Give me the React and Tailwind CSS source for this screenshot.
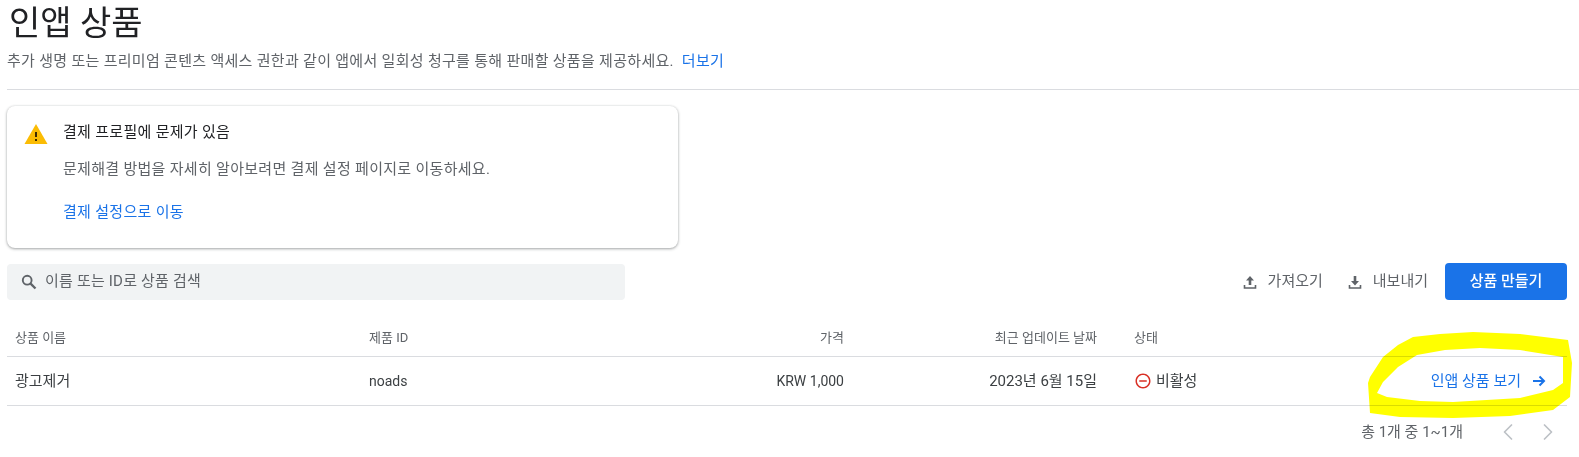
import { MdRemoveCircleOutline } from 'react-icons/md';
import { ChevronLeft, ChevronRight } from 'lucide-react';

const FONT = 'font-[Roboto,"Noto_Sans_CJK_KR",sans-serif]';
const ROW = 'grid grid-cols-[355px_300px_182px_253px_37px_1fr] items-center border-b border-[#dadce0]';

// yellow marker circle someone drew over the screenshot
const Highlight = () => (
  <svg className="absolute left-0 top-0 pointer-events-none mix-blend-multiply" width="1579" height="457">
    <path
      fill="#ffff00"
      fillRule="evenodd"
      d="M1368 383 L1370 377 L1383 357 L1398 345 L1413 337 L1440 334 L1473 332 L1520 334 L1568 340 L1572 363 L1570 397 L1553 410 L1510 416 L1453 418 L1400 417 L1370 413 Z
         M1377 393 L1383 382 L1398 367 L1417 355 L1445 350 L1480 348 L1520 350 L1563 357 L1563 383 L1553 390 L1520 398 L1453 402 L1420 401 L1387 397 Z"
    />
  </svg>
);

const WarningIcon = () => (
  <svg width="24" height="24" viewBox="0 0 24 24">
    <path d="M12 2 L23.5 22 H0.5 Z" fill="#fbbc04" />
    <rect x="11" y="10" width="2" height="5" fill="#3c2a00" />
    <rect x="11" y="17" width="2" height="2" fill="#3c2a00" />
  </svg>
);

const SearchIcon = () => (
  <svg width="18" height="18" viewBox="0 0 18 18" fill="none" stroke="currentColor">
    <circle cx="7.2" cy="7.2" r="4.4" strokeWidth="1.9" />
    <path d="M10.6 10.6 L15.5 15.5" strokeWidth="2.3" />
  </svg>
);

const UploadIcon = () => (
  <svg width="18" height="18" viewBox="0 0 18 18" fill="currentColor">
    <path d="M9 3 L13 7.5 H10.3 V12 H7.7 V7.5 H5 Z" />
    <path d="M3.5 12 V15 H14.5 V12" fill="none" stroke="currentColor" strokeWidth="1.6" />
  </svg>
);

const DownloadIcon = () => (
  <svg width="18" height="18" viewBox="0 0 18 18" fill="currentColor">
    <path d="M9 12.5 L13 8 H10.3 V3 H7.7 V8 H5 Z" />
    <path d="M3.5 12 V15 H14.5 V12" fill="none" stroke="currentColor" strokeWidth="1.6" />
  </svg>
);

const ArrowIcon = () => (
  <svg width="16" height="16" viewBox="0 0 16 16" fill="none" stroke="currentColor" strokeWidth="2" className="ml-[10px]">
    <path d="M2 8 H13" />
    <path d="M8.5 3.5 L13 8 L8.5 12.5" />
  </svg>
);

export default function App() {
  return (
    <div className={`relative h-[457px] w-[1579px] overflow-hidden bg-white pl-[7px] ${FONT}`}>
      <header className="h-[90px] border-b border-[#dadce0]">
        <h1 className="ml-[2px] pt-[2px] text-[34px] leading-[42px] text-[#202124]">인앱 상품</h1>
        <p className="mt-[7px] text-[15px] tracking-[0.3px] leading-[20px] text-[#5f6368]">
          추가 생명 또는 프리미엄 콘텐츠 액세스 권한과 같이 앱에서 일회성 청구를 통해 판매할 상품을 제공하세요.
          <a className="ml-[8px] text-[#1a73e8]">더보기</a>
        </p>
      </header>

      <section className="mt-[16px] h-[142px] w-[671px] rounded-lg bg-white shadow-[0_1px_3px_rgba(60,64,67,0.45),0_0_2px_rgba(60,64,67,0.12)] flex pl-[17px] pt-[16px]">
        <WarningIcon />
        <div className="ml-[15px] leading-[20px]">
          <div className="text-[15px] tracking-[0.3px] text-[#202124]">결제 프로필에 문제가 있음</div>
          <div className="mt-[17px] text-[15px] tracking-[0.3px] text-[#5f6368]">문제해결 방법을 자세히 알아보려면 결제 설정 페이지로 이동하세요.</div>
          <a className="mt-[23px] block text-[15px] tracking-[0.3px] text-[#1a73e8]">결제 설정으로 이동</a>
        </div>
      </section>

      <div className="mt-[15px] flex h-[37px] items-center pr-[12px]">
        <div className="flex h-[36px] w-[618px] items-center rounded bg-[#f1f3f4] pl-[13px] text-[15px] tracking-[0.2px] text-[#5f6368]">
          <SearchIcon />
          <span className="ml-[7px]">이름 또는 ID로 상품 검색</span>
        </div>
        <div className="ml-auto flex items-center text-[15px] text-[#5f6368]">
          <UploadIcon />
          <span className="ml-[9px]">가져오기</span>
          <span className="ml-[23px]"><DownloadIcon /></span>
          <span className="ml-[9px]">내보내기</span>
          <button className="ml-[17px] h-[37px] w-[122px] rounded bg-[#1a73e8] text-[15px] font-medium text-white">상품 만들기</button>
        </div>
      </div>

      <div className="mt-[20px] mr-[12px]">
        <div className={`${ROW} h-[37px] text-[13px] text-[#5f6368]`}>
          <div className="pl-[8px]">상품 이름</div>
          <div className="pl-[7px]">제품 ID</div>
          <div className="text-right">가격</div>
          <div className="text-right">최근 업데이트 날짜</div>
          <div />
          <div>상태</div>
        </div>
        <div className={`${ROW} h-[49px] text-[15px] text-[#3c4043]`}>
          <div className="pl-[8px]">광고제거</div>
          <div className="pl-[7px] text-[14px]">noads</div>
          <div className="text-right text-[14px]">KRW 1,000</div>
          <div className="text-right">2023년 6월 15일</div>
          <div />
          <div className="relative flex items-center">
            <MdRemoveCircleOutline size={18} className="text-[#d93025]" />
            <span className="ml-[4px]">비활성</span>
            <a className="ml-auto mr-[20px] flex items-center text-[#1a73e8]">
              인앱 상품 보기
              <ArrowIcon />
            </a>
          </div>
        </div>
        <div className="mt-[12px] flex items-center justify-end text-[15px] text-[#5f6368]">
          <span>총 1개 중 1~1개</span>
          <ChevronLeft size={28} strokeWidth={1.5} className="ml-[31px] text-[#bdc1c6]" />
          <ChevronRight size={28} strokeWidth={1.5} className="ml-[12px] mr-[5px] text-[#bdc1c6]" />
        </div>
      </div>

      <Highlight />
    </div>
  );
}
